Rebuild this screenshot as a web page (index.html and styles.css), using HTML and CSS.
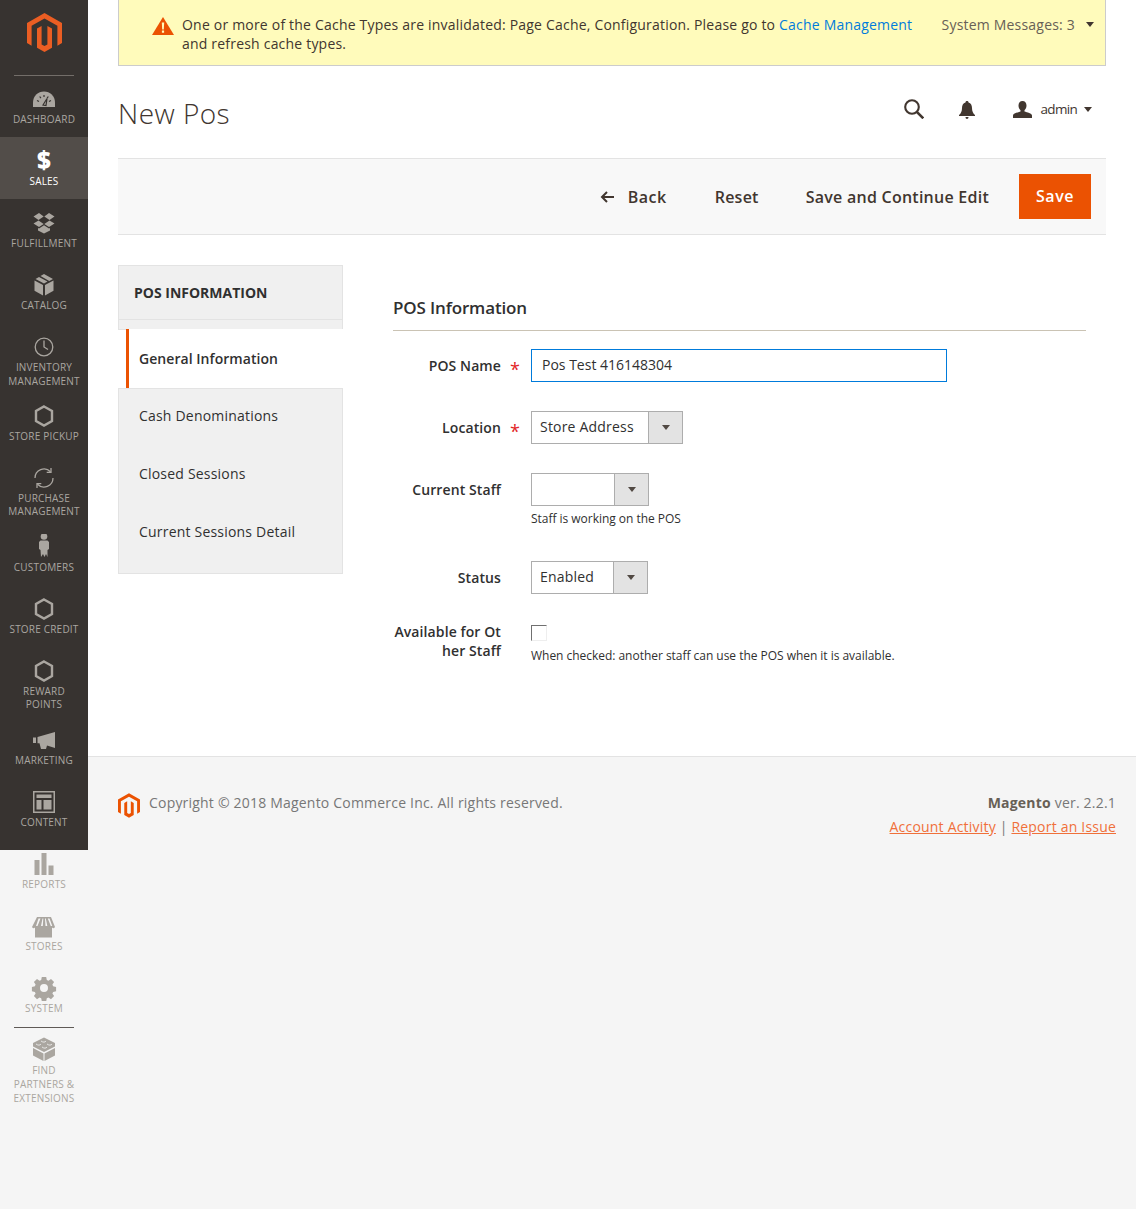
FILE: index.html
```html
<!DOCTYPE html>
<html lang="en">
<head>
<meta charset="utf-8">
<title>New Pos</title>
<link rel="stylesheet" href="styles.css">
</head>
<body>
<div class="page">
  <nav class="sidebar">
    <div class="logo"><svg width="35" height="39" viewBox="0 0 35 39"><path fill="#eb5e23" d="M17.5 0 35 10v20l-4.600 2.700V12.800L17.500 5.500 4.600 12.800v19.900L0 30V10zM10 15.500l4.600-2.600v18.600l2.900 1.600 2.900-1.600V12.900l4.600 2.600v19.300L17.500 39 10 34.800z"/></svg></div>
    <div class="sep sep-top"></div>
    <a class="item"><span class="head"><svg class="ic" viewBox="0 0 26 26"><path d="M2 21v-4.500C2 10 7 5.500 13 5.500S24 10 24 16.500V21z"/><path class="cut" d="M6 14.500l2 1M8.700 10.500l1.200 1.700M13 9v2M17.300 10.500l-1.200 1.700M20 14.500l-2 1M12 19l4-6.500-1 7z"/></svg></span><span class="lbl">Dashboard</span></a>
    <a class="item on"><span class="head"><span class="dollar">$</span></span><span class="lbl">Sales</span></a>
    <a class="item"><span class="head"><svg class="ic" viewBox="0 0 26 26"><path d="M2.500 6.500 8 3l4.700 3.500L7.500 10zM13.300 6.500 18 3l5.500 3.500L18.500 10zM2.500 13.500l5-3 5.200 3.500L8 17zM13.300 14l5.200-3.500 5 3L18 17zM7 18l1 .5 5-3.300 5 3.300 1-.5v2.500l-6 3-6-3z"/></svg></span><span class="lbl">Fulfillment</span></a>
    <a class="item"><span class="head"><svg class="ic" viewBox="0 0 26 26"><path d="M3.500 8.500 12 13v10.500l-8.500-4.700zM22.500 8.500V18.800L14 23.500V13zM4.500 7l3.500-2 8.500 4.600-3.500 2zM9.500 4l3.500-2 9 5-3.800 2z"/></svg></span><span class="lbl">Catalog</span></a>
    <a class="item"><span class="head"><svg class="ic line" viewBox="0 0 26 26"><circle cx="13" cy="13" r="8.800"/><path d="M13 6.500V13l4 2.500"/></svg></span><span class="lbl">Inventory Management</span></a>
    <a class="item"><span class="head"><svg class="ic hex" viewBox="0 0 26 26"><path d="M13 3.500 21 8v10l-8 4.500L5 18V8z"/></svg></span><span class="lbl">Store Pickup</span></a>
    <a class="item"><span class="head"><svg class="ic line" viewBox="0 0 26 26"><path d="M4 13a9 9 0 0 1 15.500-6.200M22 13a9 9 0 0 1-15.500 6.200"/><path d="M20 3v4.300h-4.300M6 23v-4.300h4.300"/></svg></span><span class="lbl">Purchase Management</span></a>
    <a class="item"><span class="head"><svg class="ic" viewBox="0 2 26 26"><circle cx="13" cy="4.500" r="3.300"/><path d="M9.500 8.500h7l1.500 1.500v7l-1.500 1V25l-1.500-3-1.500 3-1.500-3L10 25l-.5-7L8 17v-7z"/></svg></span><span class="lbl">Customers</span></a>
    <a class="item"><span class="head"><svg class="ic hex" viewBox="0 0 26 26"><path d="M13 3.500 21 8v10l-8 4.500L5 18V8z"/></svg></span><span class="lbl">Store Credit</span></a>
    <a class="item"><span class="head"><svg class="ic hex" viewBox="0 0 26 26"><path d="M13 3.500 21 8v10l-8 4.500L5 18V8z"/></svg></span><span class="lbl">Reward Points</span></a>
    <a class="item"><span class="head"><svg class="ic" viewBox="0 0 26 26"><path d="M2 10.500h3v5.500H2zM6.500 10 24 5v16l-8-2.500-1 3.500H10l-1.500-5.800-2 0z"/></svg></span><span class="lbl">Marketing</span></a>
    <a class="item"><span class="head"><svg class="ic" viewBox="0 0 26 26"><path fill-rule="evenodd" d="M2 2h22v22H2zM3.500 3.500v19h19v-19zM5.500 5.500h15v3.500h-15zM5.500 11h5v9.500h-5zM12.500 11h8v9.500h-8z"/></svg></span><span class="lbl">Content</span></a>
    <a class="item"><span class="head"><svg class="ic" viewBox="0 0 26 26"><path d="M3.500 9h5v15h-5zM10.500 2h5v22h-5zM17.500 14.500h5V24h-5z"/></svg></span><span class="lbl">Reports</span></a>
    <a class="item"><span class="head"><svg class="ic" viewBox="0 0 26 26"><path fill-rule="evenodd" d="M6 4h14l4 10c-1 1.500-2 1.500-3 .5v10H4v-10c-1 1-2 1-3-.5zM7.500 5.500 5 13h1.500l3-7.500zM11.500 5.500 10 13h1.800l.5-7.500zM14 5.500l.5 7.500h1.800l-1.500-7.500zM16.800 5.500l3 7.500h1.500l-2.800-7.500z"/></svg></span><span class="lbl">Stores</span></a>
    <a class="item"><span class="head"><svg class="ic" viewBox="0 0 26 26"><path fill-rule="evenodd" d="M10.800 2h4.400l.6 3 1.700.7 2.500-1.700 3.100 3.100-1.700 2.500.7 1.700 3 .6v4.400l-3 .6-.7 1.700 1.700 2.500-3.100 3.100-2.500-1.700-1.700.7-.6 3h-4.400l-.6-3-1.700-.7-2.500 1.700-3.100-3.100 1.700-2.500-.7-1.700-3-.6v-4.400l3-.6.7-1.700-1.700-2.500 3.100-3.100 2.500 1.700 1.700-.7zM13 9a4 4 0 1 0 0 8 4 4 0 0 0 0-8z"/></svg></span><span class="lbl">System</span></a>
    <div class="sep sep-low"></div>
    <a class="item"><span class="head"><svg class="ic" viewBox="0 0 26 26"><path d="M13 1.500l11 5.500v3.500L13 16 2 10.500V7z"/><path d="M2 12l10.500 5.500V25L2 19.500zM24 12v7.500L13.500 25v-7.500z"/><path class="cut thin" d="M5 8c2 1.500 4 1.500 5 0M10 5c2 1.500 4 1.500 5 0M11 11c2 1.500 4 1.500 5 0M16 8c2 1.500 4 1.500 5 0"/></svg></span><span class="lbl lbl-find">Find<br>Partners &amp;<br>Extensions</span></a>
  </nav>

  <div class="main">
    <div class="wrap">
      <div class="notice">
        <svg class="warn" width="22" height="18" viewBox="0 0 22 18"><path fill="#eb5202" d="M11 0 22 18H0z"/><path fill="#fffbbb" d="M9.800 5.500h2.400l-.4 7h-1.600zM9.900 13.500h2.200v2.200H9.900z"/></svg>
        <p class="msg">One or more of the Cache Types are invalidated: Page Cache, Configuration. Please go to <a class="link">Cache Management</a> and refresh cache types.</p>
        <div class="sys">System Messages: 3<i class="caret"></i></div>
      </div>

      <header class="top">
        <h1 class="title">New Pos</h1>
        <div class="tools">
          <svg class="t-search" width="20" height="20" viewBox="0 0 20 20"><circle cx="8" cy="8" r="6.800" fill="none" stroke="#41362f" stroke-width="2.100"/><path d="M12.800 12.800 19.300 19.300" stroke="#41362f" stroke-width="2.600"/></svg>
          <svg class="t-bell" width="16" height="18" viewBox="0 0 16 18"><path fill="#41362f" d="M8 0c1 0 1.500.6 1.500 1.400C12 2 13 4.500 13 7c0 3 1 5.500 3 7v1H0v-1c2-1.500 3-4 3-7 0-2.500 1-5 3.500-5.600C6.500.6 7 0 8 0zM6.500 16h3c0 1-.6 2-1.500 2s-1.500-1-1.500-2z"/></svg>
          <div class="user">
            <svg width="19" height="17" viewBox="0 0 19 17"><path fill="#41362f" d="M9.500 0c2.500 0 4 1.800 4 4.500 0 2-.8 3.700-2 4.700v1.300c2.500 1 7.500 1.800 7.500 4V17H0v-2.500c0-2.200 5-3 7.500-4V9.200c-1.200-1-2-2.700-2-4.700C5.500 1.800 7 0 9.500 0z"/></svg>
            <span class="uname">admin</span><i class="caret"></i>
          </div>
        </div>
      </header>

      <div class="actions">
        <a class="btn btn-back"><svg class="arrow" width="14" height="12" viewBox="0 0 14 12"><path fill="none" stroke="#41362f" stroke-width="2" d="M14 6H2M7 1 2 6l5 5"/></svg>Back</a>
        <a class="btn btn-reset">Reset</a>
        <a class="btn btn-cont">Save and Continue Edit</a>
        <a class="save">Save</a>
      </div>

      <div class="columns">
        <aside class="tabs">
          <div class="tabs-head"><div class="tabs-title">POS INFORMATION</div></div>
          <a class="tab-on">General Information</a>
          <div class="tabs-rest">
            <a class="tab">Cash Denominations</a>
            <a class="tab">Closed Sessions</a>
            <a class="tab">Current Sessions Detail</a>
          </div>
        </aside>
        <section class="content">
          <h2 class="sect">POS Information</h2>
          <div class="form">
            <label class="fl">POS Name</label><span class="req">*</span>
            <div class="ctl"><input class="input" type="text" value="Pos Test 416148304"></div>

            <label class="fl">Location</label><span class="req">*</span>
            <div class="ctl"><div class="sel sel-loc"><span class="val">Store Address</span><span class="drop"><i class="caret"></i></span></div></div>

            <label class="fl">Current Staff</label><span></span>
            <div class="ctl"><div class="sel sel-staff"><span class="val"></span><span class="drop"><i class="caret"></i></span></div><p class="note note-gap">Staff is working on the POS</p></div>

            <label class="fl">Status</label><span></span>
            <div class="ctl"><div class="sel sel-status"><span class="val">Enabled</span><span class="drop"><i class="caret"></i></span></div></div>

            <label class="fl fl-flat">Available for Ot<br>her Staff</label><span></span>
            <div class="ctl"><input class="check" type="checkbox"><p class="note">When checked: another staff can use the POS when it is available.</p></div>
          </div>
        </section>
      </div>
    </div>

    <footer class="footer">
      <div class="copy">
        <svg width="22" height="25" viewBox="0 0 35 39"><path fill="#eb5202" d="M17.500 0 35 10v20l-4.600 2.700V12.800L17.500 5.500 4.600 12.800v19.900L0 30V10zM10 15.500l4.600-2.600v18.600l2.900 1.600 2.900-1.600V12.900l4.600 2.600v19.300L17.500 39 10 34.800z"/></svg>
        <span>Copyright © 2018 Magento Commerce Inc. All rights reserved.</span>
      </div>
      <div class="ver">
        <div class="ver-l"><b>Magento</b> ver. 2.2.1</div>
        <div class="ver-l"><a class="flink">Account Activity</a> | <a class="flink">Report an Issue</a></div>
      </div>
    </footer>
  </div>
</div>
</body>
</html>
```

FILE: styles.css
```css
* { box-sizing: border-box; }
html, body { margin: 0; padding: 0; }
body {
  background: #f5f5f5;
  font-family: "Open Sans", "Liberation Sans", sans-serif;
  font-size: 14px;
  color: #303030;
}
a { color: inherit; text-decoration: none; }
i { display: block; }
p, h1, h2 { margin: 0; }

.page { display: flex; min-height: 1209px; align-items: flex-start; }

/* sidebar */
.sidebar { width: 88px; height: 850px; flex: none; background: #373330; padding-top: 13px; }
.logo { display: flex; justify-content: center; height: 39px; margin-bottom: 23px; }
.sep { height: 1px; margin: 0 14px; background: #736e69; }
.sep-top { margin-bottom: -1px; position: relative; }
.sep-low { background: #5f5a56; margin-top: 1px; margin-bottom: -3px; position: relative; z-index: 1; }
.item {
  display: flex;
  flex-direction: column;
  align-items: center;
  min-height: 62px;
  padding: 0 3px 3.7px;
  color: #aaa6a0;
}
.head { height: 38px; padding-top: 11px; display: flex; justify-content: center; }
.lbl {
  display: block;
  padding: 0 3px;
  font-size: 10px;
  line-height: 13.6px;
  letter-spacing: .2px;
  text-align: center;
  text-transform: uppercase;
}
.lbl-find { line-height: 14px; }
.on { background: #524d49; color: #fff; }
.dollar { display: block; font-size: 24px; font-weight: 800; line-height: 24px; }
.ic { display: block; width: 26px; height: 26px; fill: #aaa6a0; }
.cut { fill: none; stroke: #373330; stroke-width: 1.200; }
.thin { stroke: #f5f5f5; stroke-width: .8; }
.line { fill: none; stroke: #aaa6a0; stroke-width: 1.300; }
.hex { fill: none; stroke: #aaa6a0; stroke-width: 2.400; }

/* main */
.main { flex: 1; min-width: 0; letter-spacing: .2px; }
.wrap { background: #fff; padding: 0 30px; height: 756px; }

.notice {
  display: flex;
  align-items: flex-start;
  height: 66px;
  padding: 15px 11px 0 33px;
  background: #fffbbb;
  border: 1px solid #ccc;
  border-top: 0;
}
.warn { flex: none; margin-top: 2px; }
.msg { width: 738px; margin-left: 8px; line-height: 19px; color: #41362f; flex: none; }
.link { color: #007bdb; }
.sys { display: flex; align-items: center; flex: 1; justify-content: flex-end; line-height: 19px; color: #676056; }
.caret {
  width: 0; height: 0;
  border-left: 4px solid transparent;
  border-right: 4px solid transparent;
  border-top: 5px solid #41362f;
}
.sys .caret { margin-left: 11px; }

.top { display: flex; justify-content: space-between; height: 92px; }
.title { font-size: 28px; font-weight: 300; line-height: 38px; letter-spacing: .45px; color: #41362f; margin-top: 28px; }
.tools { display: flex; align-items: flex-start; padding-top: 33px; padding-right: 14px; }
.t-search { margin-right: 35px; }
.t-bell { margin-top: 2px; margin-right: 38px; }
.user { display: flex; align-items: center; margin-top: 1px; }
.uname { font-size: 13.500px; letter-spacing: -.7px; margin: 1px 7px 0 9px; color: #41362f; line-height: 17px; }

.actions {
  display: flex;
  justify-content: flex-end;
  align-items: center;
  height: 77px;
  padding-right: 15px;
  background: #f8f8f8;
  border-top: 1px solid #e3e3e3;
  border-bottom: 1px solid #e3e3e3;
}
.btn {
  display: flex;
  align-items: center;
  font-size: 16px;
  font-weight: 600;
  letter-spacing: .25px;
  color: #41362f;
}
.btn-back { margin-right: 48px; letter-spacing: .5px; }
.btn-reset { margin-right: 47px; }
.btn-cont { margin-right: 30px; }
.arrow { margin-right: 14px; }
.save {
  display: block;
  width: 72px;
  height: 45px;
  line-height: 45px;
  text-align: center;
  background: #eb5202;
  color: #fff;
  font-size: 16px;
  font-weight: 600;
  letter-spacing: .6px;
}

.columns { display: flex; padding-top: 30px; }
.tabs { width: 225px; flex: none; }
.tabs-head { height: 65px; background: #f0f0f0; border: 1px solid #e3e3e3; }
.tabs-title {
  height: 54px;
  padding: 17px 0 0 15px;
  line-height: 19px;
  font-weight: 700;
  letter-spacing: 0;
  color: #303030;
  border-bottom: 1px solid #e3e3e3;
}
.tab-on {
  display: block;
  margin: -1px 0 0 8px;
  height: 59px;
  padding-left: 10px;
  line-height: 60px;
  font-weight: 600;
  letter-spacing: .05px;
  color: #303030;
  background: #fff;
  border-left: 3px solid #eb5202;
  position: relative;
}
.tabs-rest { height: 186px; background: #f0f0f0; border: 1px solid #e3e3e3; }
.tab { display: block; height: 58px; padding-left: 20px; line-height: 54px; color: #303030; }

.content { flex: 1; min-width: 0; margin: 0 20px 0 50px; }
.sect {
  margin-top: 30px;
  height: 36px;
  font-size: 17px;
  font-weight: 600;
  line-height: 26px;
  letter-spacing: -.15px;
  color: #303030;
  border-bottom: 1px solid #cac3b4;
}
.form {
  display: grid;
  grid-template-columns: 108px 30px 1fr;
  row-gap: 29px;
  margin-top: 18px;
}
.fl { display: block; padding-top: 7px; text-align: right; font-weight: 600; line-height: 19px; letter-spacing: .1px; color: #303030; }
.fl-flat { padding-top: 0; margin-top: -1px; }
.req { padding: 11px 2px 0 0; text-align: center; color: #e22626; font-size: 18px; line-height: 18px; }
.input {
  display: block;
  width: 416px;
  height: 33px;
  padding: 0 10px 2px;
  margin: 0;
  border: 1px solid #007bdb;
  border-radius: 0;
  outline: 0;
  background: #fff;
  font: 14px/19px "Open Sans", "Liberation Sans", sans-serif;
  color: #303030;
}
.sel { display: flex; height: 33px; background: #fff; border: 1px solid #adadad; }
.sel-loc { width: 152px; }
.sel-staff { width: 118px; }
.sel-status { width: 117px; }
.val { flex: 1; padding-left: 8px; line-height: 29px; color: #303030; }
.drop {
  width: 34px;
  flex: none;
  display: flex;
  align-items: center;
  justify-content: center;
  background: #e3e3e3;
  border-left: 1px solid #adadad;
}
.drop .caret { border-top-color: #514943; }
.note { font-size: 12px; line-height: 19px; letter-spacing: -.03px; color: #303030; }
.note-gap { margin-top: 3px; margin-bottom: 4px; }
.check {
  display: block;
  appearance: none;
  -webkit-appearance: none;
  width: 16px;
  height: 16px;
  margin: 2px 0 5px;
  border-style: solid;
  border-width: 1px;
  border-color: #707070 #eeeeee #eeeeee #707070;
  border-radius: 0;
  background: #fff;
}

.footer {
  display: flex;
  justify-content: space-between;
  padding: 36px 20px 0 30px;
  border-top: 1px solid #e3e3e3;
  color: #777;
}
.copy { display: flex; align-items: flex-start; line-height: 20px; }
.copy svg { margin-right: 9px; flex: none; }
.ver { text-align: right; }
.ver-l { line-height: 20px; margin-bottom: 4px; }
.ver b { font-weight: 700; color: #676056; }
.flink { color: #f0703a; text-decoration: underline; }
```
